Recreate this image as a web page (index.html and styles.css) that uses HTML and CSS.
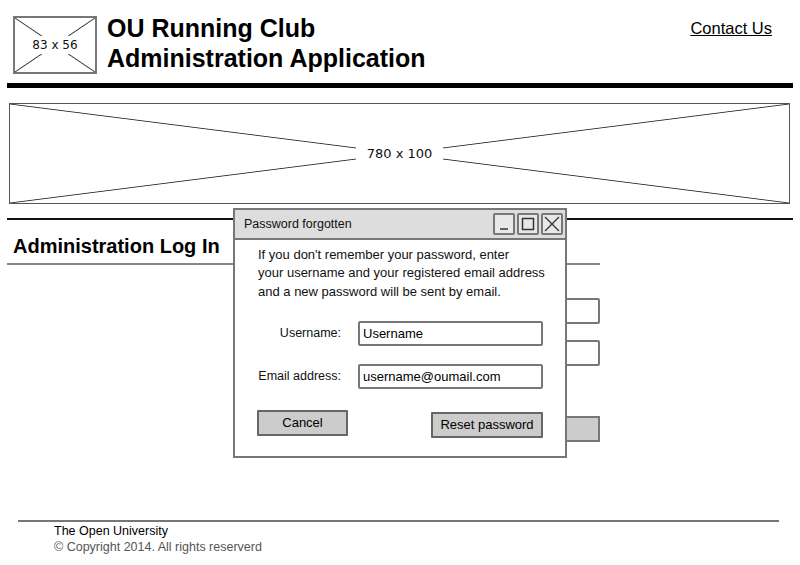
FILE: index.html
```html
<!DOCTYPE html>
<html lang="en">
<head>
<meta charset="utf-8">
<title>OU Running Club - Administration Application</title>
<link rel="stylesheet" href="styles.css">
</head>
<body>
<div class="page">
  <header class="top">
    <div class="ph logo"><span>83 x 56</span></div>
    <h1 class="title">OU Running Club<br>Administration Application</h1>
    <a class="contact" href="#">Contact Us</a>
  </header>
  <div class="rule-thick"></div>
  <div class="ph banner"><span>780 x 100</span></div>
  <div class="rule"></div>

  <main class="login">
    <h2 class="login-head">Administration Log In</h2>
    <form class="login-form">
      <label class="lf-label">Username:</label>
      <input class="lf-input" type="text" value="">
      <label class="lf-label">Password:</label>
      <input class="lf-input" type="password" value="">
      <a class="lf-link" href="#">Forgotten password?</a>
      <button class="lf-button" type="button">Log in</button>
    </form>
  </main>

  <footer class="foot">
    <div class="foot-name">The Open University</div>
    <div class="foot-copy">© Copyright 2014. All rights reserverd</div>
  </footer>

  <div class="dialog">
    <div class="dlg-bar">
      <span class="dlg-title">Password forgotten</span>
      <div class="dlg-ctrls">
        <span class="ctrl"><svg viewBox="0 0 18 18" width="18" height="18"><line x1="5" y1="14" x2="13" y2="14" stroke="#333" stroke-width="1.5"/></svg></span>
        <span class="ctrl"><svg viewBox="0 0 18 18" width="18" height="18"><rect x="3.5" y="3.5" width="11" height="11" fill="none" stroke="#333" stroke-width="1.5"/></svg></span>
        <span class="ctrl"><svg viewBox="0 0 18 18" width="18" height="18"><path d="M2 2 L16 16 M16 2 L2 16" stroke="#333" stroke-width="1.3" fill="none"/></svg></span>
      </div>
    </div>
    <div class="dlg-body">
      <p class="dlg-text">If you don't remember your password, enter<br>your username and your registered email address<br>and a new password will be sent by email.</p>
      <div class="dlg-form">
        <div class="dlg-row">
          <span class="dlg-label">Username:</span>
          <span class="dlg-input">Username</span>
        </div>
        <div class="dlg-row">
          <span class="dlg-label">Email address:</span>
          <span class="dlg-input">username@oumail.com</span>
        </div>
      </div>
      <div class="dlg-actions">
        <span class="btn btn-cancel">Cancel</span>
        <span class="btn btn-reset">Reset password</span>
      </div>
    </div>
  </div>
</div>
</body>
</html>
```

FILE: styles.css
```css
* { box-sizing: border-box; }
html, body { margin: 0; padding: 0; background: #fff; }
body {
  font-family: "Liberation Sans", Arial, sans-serif;
  color: #111;
  overflow: hidden;
}
.page {
  position: relative;
  width: 800px;
  height: 565px;
}

/* placeholder boxes with crossed diagonals */
.ph {
  display: flex;
  align-items: center;
  justify-content: center;
  border: 2px solid #777;
  background:
    linear-gradient(to top right, transparent calc(50% - 0.9px), #333 50%, transparent calc(50% + 0.9px)),
    linear-gradient(to bottom right, transparent calc(50% - 0.9px), #333 50%, transparent calc(50% + 0.9px)),
    #fff;
  font-family: "DejaVu Sans", Tahoma, sans-serif;
  font-size: 12px;
  color: #111;
}
.ph span { background: #fff; }

.top {
  display: flex;
  align-items: flex-start;
  padding: 16px 28px 0 13px;
  height: 83px;
}
.logo {
  width: 84px;
  height: 58px;
  flex: none;
}
.logo span { padding: 2px 4px; }
.title {
  margin: -3px 0 0 10px;
  font-size: 25px;
  line-height: 30px;
  font-weight: bold;
  color: #000;
}
.contact {
  margin-left: auto;
  margin-top: 2px;
  font-size: 16.5px;
  line-height: 20px;
  color: #000;
  text-decoration: underline;
}

.rule-thick {
  margin: 0 7px;
  height: 5px;
  background: #000;
}
.banner {
  margin: 15px 10px 0 9px;
  height: 101px;
  border-width: 1.5px;
  border-color: #555;
  font-size: 13px;
}
.banner span { padding: 0 11px; }
.rule {
  margin: 14px 7px 0;
  height: 2px;
  background: #111;
}

.login { margin: 0 200px 0 7px; }
.login-head {
  margin: 0;
  padding: 14px 6px 5px;
  font-size: 20px;
  line-height: 24px;
  font-weight: bold;
  color: #000;
  border-bottom: 2px solid #888;
}
.login-form {
  display: grid;
  grid-template-columns: 1fr 200px;
  row-gap: 16px;
  align-items: center;
  margin-top: 33px;
  font-size: 13px;
}
.lf-label { text-align: right; padding-right: 16px; }
.lf-input {
  height: 26px;
  border: 2px solid #777;
  border-radius: 2px;
  width: 200px;
}
.lf-link { grid-column: 2; font-size: 12px; color: #000; height: 16px; margin-top: 4px; }
.lf-button {
  grid-column: 2;
  justify-self: end;
  width: 92px;
  height: 26px;
  margin-top: -2px;
  border: 2px solid #777;
  background: #ccc;
  font: 13px "Liberation Sans", Arial, sans-serif;
  text-align: left;
  padding-left: 20px;
}

.foot {
  margin: 78px 21px 0 18px;
  padding-left: 36px;
  border-top: 2px solid #777;
  font-size: 12.5px;
}
.foot-name { line-height: 16px; color: #000; padding-top: 1px; }
.foot-copy { line-height: 17px; color: #555; }

/* modal dialog */
.dialog {
  position: absolute;
  left: 233px;
  top: 208px;
  width: 334px;
  height: 250px;
  border: 2px solid #777;
  background: #fff;
  font-size: 13px;
}
.dlg-bar {
  display: flex;
  align-items: center;
  height: 30px;
  padding: 0 2px 0 9px;
  background: #ddd;
  border-bottom: 2px solid #777;
}
.dlg-title { font-size: 12.5px; color: #111; }
.dlg-ctrls {
  display: flex;
  gap: 2px;
  margin-left: auto;
}
.ctrl {
  display: flex;
  align-items: center;
  justify-content: center;
  width: 22px;
  height: 22px;
  border: 2px solid #777;
  border-radius: 2px;
  background: #e8e8e8;
}
.dlg-body { padding: 6px 0 0 23px; }
.dlg-text {
  margin: 0;
  line-height: 18.3px;
  color: #111;
}
.dlg-form {
  display: flex;
  flex-direction: column;
  gap: 18px;
  margin-top: 20px;
}
.dlg-row {
  display: flex;
  align-items: center;
  gap: 17px;
}
.dlg-label {
  flex: none;
  width: 83px;
  text-align: right;
  white-space: nowrap;
  font-size: 12.5px;
}
.dlg-input {
  width: 185px;
  height: 25px;
  line-height: 21px;
  border: 2px solid #777;
  border-radius: 2px;
  padding-left: 3px;
  color: #000;
}
.dlg-actions {
  display: flex;
  justify-content: space-between;
  align-items: flex-start;
  width: 286px;
  margin: 21px 0 0 -1px;
}
.btn {
  display: flex;
  align-items: center;
  justify-content: center;
  height: 26px;
  border: 2px solid #666;
  border-radius: 1px;
  background: #ccc;
  color: #000;
}
.btn-cancel { width: 91px; }
.btn-reset { width: 112px; margin-top: 2px; }
```
